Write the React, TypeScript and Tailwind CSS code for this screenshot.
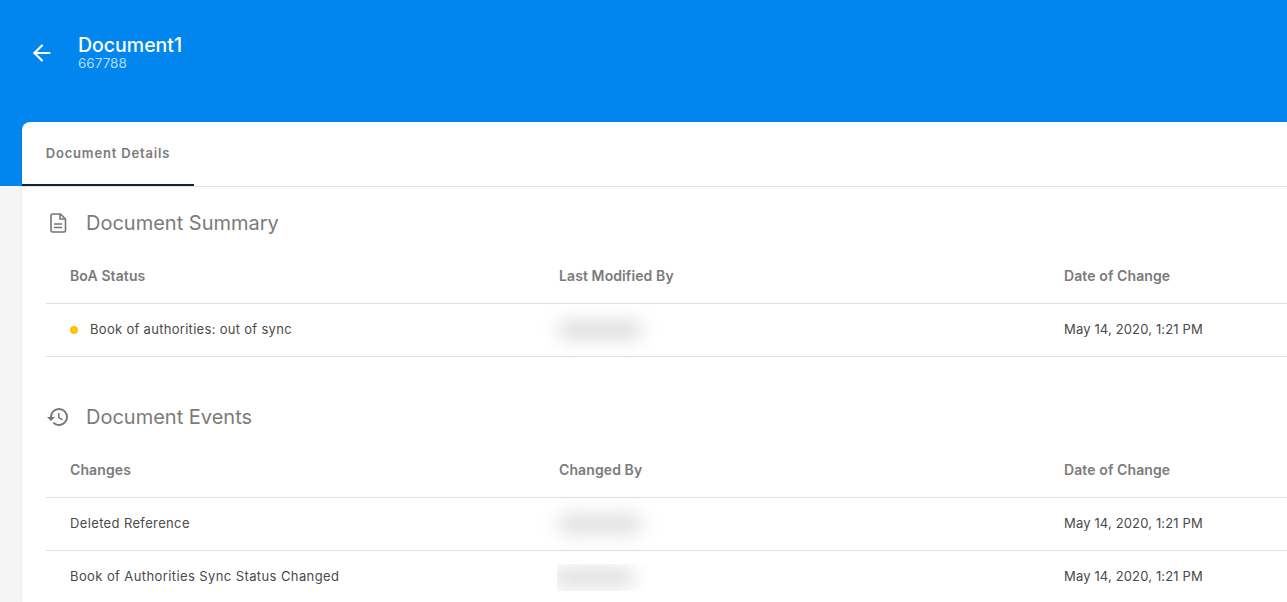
import { ArrowLeft } from 'lucide-react'

const COLS = 'grid grid-cols-[489px_505px_1fr] pl-6 items-center'

// names are blurred out in the screenshot
function BlurredName({ clipped = false }: { clipped?: boolean }) {
  if (clipped) {
    return (
      <div className="relative -ml-[2px] h-[27px] w-[90px] overflow-hidden">
        <div className="absolute -left-[2px] top-[5px] h-[17px] w-[78px] bg-[#dcdcdc] blur-[9px]" />
      </div>
    )
  }
  return (
    <div className="relative -ml-[14px] h-[34px] w-[108px]">
      <div className="absolute left-[15px] top-[8px] h-[18px] w-[80px] bg-[#dcdcdc] blur-[9px]" />
    </div>
  )
}

function SectionTitle({ icon, title }: { icon: React.ReactNode; title: string }) {
  return (
    <div className="flex h-[34px] items-center">
      <div className="flex w-[40px] items-center">{icon}</div>
      <h2 className="text-[20px] font-normal text-[#7b7b7b]">{title}</h2>
    </div>
  )
}

function HeaderRow({ cols }: { cols: string[] }) {
  return (
    <div className={`${COLS} h-[54px] border-b border-[#e0e0e0] pb-[2px] text-[14px] font-semibold tracking-[0.1px] text-[#7b7b7b]`}>
      {cols.map((c) => (
        <span key={c}>{c}</span>
      ))}
    </div>
  )
}

function Row({ children, clipped, last }: { children: React.ReactNode; clipped?: boolean; last?: boolean }) {
  return (
    <div className={`${COLS} text-[13px] text-[#4a4a4a] ${last ? 'h-[52px]' : 'h-[53px] border-b border-[#e0e0e0]'}`}>
      <div className="flex items-center tracking-[0.36px]">{children}</div>
      <BlurredName clipped={clipped} />
      <span className="tracking-[0.15px]">May 14, 2020, 1:21 PM</span>
    </div>
  )
}

export default function App() {
  return (
    <div className="relative h-[602px] w-full overflow-hidden bg-[#f5f5f5] font-['Inter','Liberation_Sans',sans-serif]">
      {/* Blue band behind the card */}
      <div className="h-[186px] bg-[#0086ee]">
        <div className="flex items-start pl-[29px] pt-[35px]">
          <ArrowLeft className="mt-[5px] h-[26px] w-[26px] text-white" strokeWidth={2} />
          <div className="ml-[23px]">
            <div className="text-[19.500px] font-medium leading-[20px] text-white">Document1</div>
            <div className="text-[13.500px] leading-[16px] text-[#b3dbfb]">667788</div>
          </div>
        </div>
      </div>

      {/* Card */}
      <div className="absolute bottom-0 left-[22px] right-0 top-[122px] rounded-tl-lg bg-white shadow-[0_0_2px_rgba(0,0,0,0.12)]">
        <div className="h-[65px] border-b border-[#e0e0e0]">
          <div className="flex h-[64px] w-[172px] items-center justify-center border-b-2 border-[#0a2340] pt-[1px] text-[13px] font-semibold tracking-[0.84px] text-[#7b7b7b]">
            Document Details
          </div>
        </div>

        <section className="pl-6 pt-[19px]">
          <SectionTitle
            title="Document Summary"
            icon={
              <svg width="24" height="24" viewBox="0 0 24 24" fill="none" stroke="#757575" strokeWidth="1.6" strokeLinejoin="round">
                <path d="M6.500 3h8l5 5v11.500a1.500 1.500 0 0 1-1.500 1.500h-11.500a1.500 1.500 0 0 1-1.500-1.500v-15a1.500 1.500 0 0 1 1.500-1.500z" />
                <path d="M14 3v5h5.500" />
                <path d="M8 13h8M8 16.500h8" />
              </svg>
            }
          />
          <div className="pt-[10px]">
            <HeaderRow cols={['BoA Status', 'Last Modified By', 'Date of Change']} />
            <Row>
              <span className="mr-[12px] h-[8px] w-[8px] rounded-full bg-[#ffc107]" />
              <span className="tracking-[0.3px]">Book of authorities: out of sync</span>
            </Row>
          </div>
        </section>

        <section className="pl-6 pt-[43px]">
          <SectionTitle
            title="Document Events"
            icon={
              <svg width="24" height="24" viewBox="0 0 24 24" fill="#757575">
                <path d="M13 3a9 9 0 0 0-9 9H1l3.890 3.890.070.140L9 12H6c0-3.870 3.130-7 7-7s7 3.130 7 7-3.130 7-7 7c-1.930 0-3.680-.790-4.940-2.060l-1.420 1.420A8.954 8.954 0 0 0 13 21a9 9 0 0 0 0-18zm-1 5v5l4.280 2.540.720-1.210-3.500-2.080V8H12z" />
              </svg>
            }
          />
          <div className="pt-[10px]">
            <HeaderRow cols={['Changes', 'Changed By', 'Date of Change']} />
            <Row>Deleted Reference</Row>
            <Row clipped last>
              <span className="tracking-[0.4px]">Book of Authorities Sync Status Changed</span>
            </Row>
          </div>
        </section>
      </div>
    </div>
  )
}
